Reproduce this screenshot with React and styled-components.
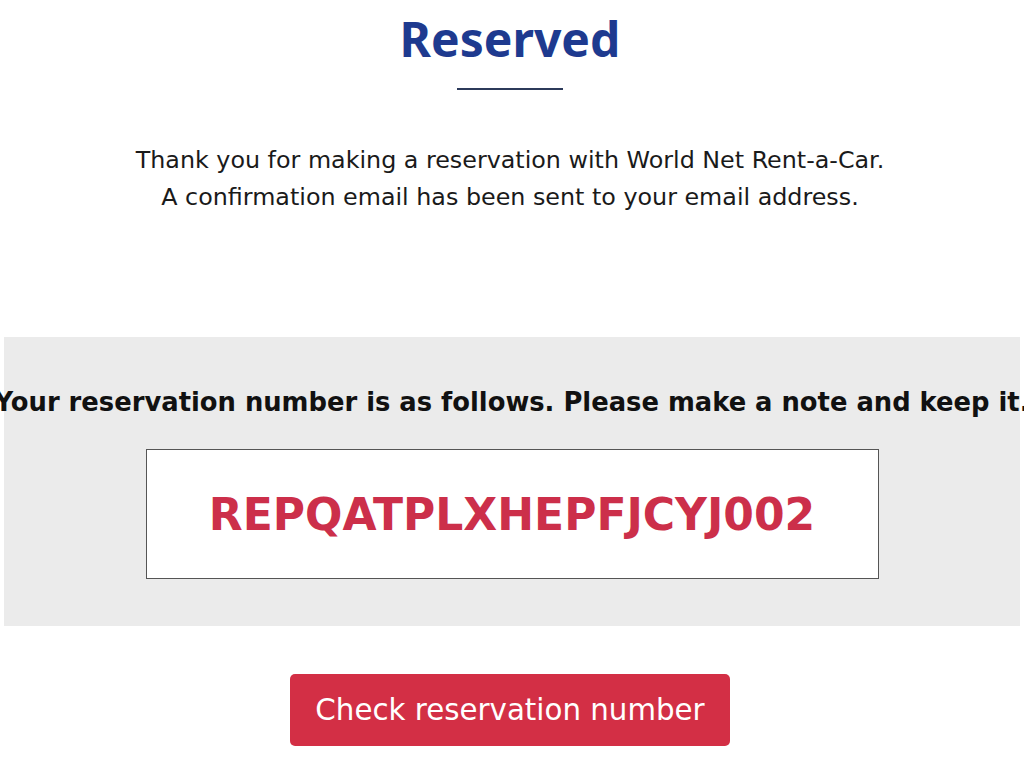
import React from 'react';
import styled, { createGlobalStyle } from 'styled-components';

const GlobalStyle = createGlobalStyle`
  html, body {
    margin: 0;
    padding: 0;
    background: #ffffff;
  }
  body {
    font-family: "DejaVu Sans", "Noto Sans", sans-serif;
    color: #222;
    overflow: hidden;
  }
`;

const Page = styled.div`
  width: 1020px;
  display: flex;
  flex-direction: column;
  align-items: center;
`;

const Title = styled.h1`
  margin: 8px 0 0 0;
  font-family: "Noto Sans", sans-serif;
  font-size: 48px;
  line-height: 62px;
  font-weight: 700;
  color: #1e3a8f;
`;

const Divider = styled.div`
  width: 106px;
  height: 2px;
  margin-top: 18px;
  background: #2c3a5a;
`;

const Message = styled.p`
  margin: 52px 0 0 0;
  font-size: 23.8px;
  line-height: 37px;
  text-align: center;
  color: #1a1a1a;
`;

const NumberPanel = styled.section`
  align-self: stretch;
  margin: 121px 0 0 4px;
  height: 289px;
  background: #ebebeb;
  display: flex;
  flex-direction: column;
  align-items: center;
`;

const PanelHeading = styled.h2`
  margin: 45px 0 0 0;
  font-size: 25.8px;
  line-height: 40px;
  font-weight: 700;
  white-space: nowrap;
  color: #111;
`;

const NumberBox = styled.div`
  width: 731px;
  height: 128px;
  margin-top: 27px;
  background: #ffffff;
  border: 1px solid #555;
  display: flex;
  align-items: center;
  justify-content: center;
`;

const Code = styled.span`
  font-size: 44px;
  font-weight: 700;
  color: #cc2f4a;
`;

const CheckButton = styled.button`
  margin-top: 48px;
  width: 440px;
  height: 72px;
  border: none;
  border-radius: 5px;
  background: #d32f45;
  color: #ffffff;
  font-family: "DejaVu Sans", sans-serif;
  font-size: 29.3px;
  cursor: pointer;
`;

export default function App() {
  return (
    <>
      <GlobalStyle />
      <Page>
        <Title>Reserved</Title>
        <Divider />
        <Message>
          Thank you for making a reservation with World Net Rent-a-Car.
          <br />
          A confirmation email has been sent to your email address.
        </Message>
        <NumberPanel>
          <PanelHeading>
            Your reservation number is as follows. Please make a note and keep it.
          </PanelHeading>
          <NumberBox>
            <Code>REPQATPLXHEPFJCYJ002</Code>
          </NumberBox>
        </NumberPanel>
        <CheckButton>Check reservation number</CheckButton>
      </Page>
    </>
  );
}
